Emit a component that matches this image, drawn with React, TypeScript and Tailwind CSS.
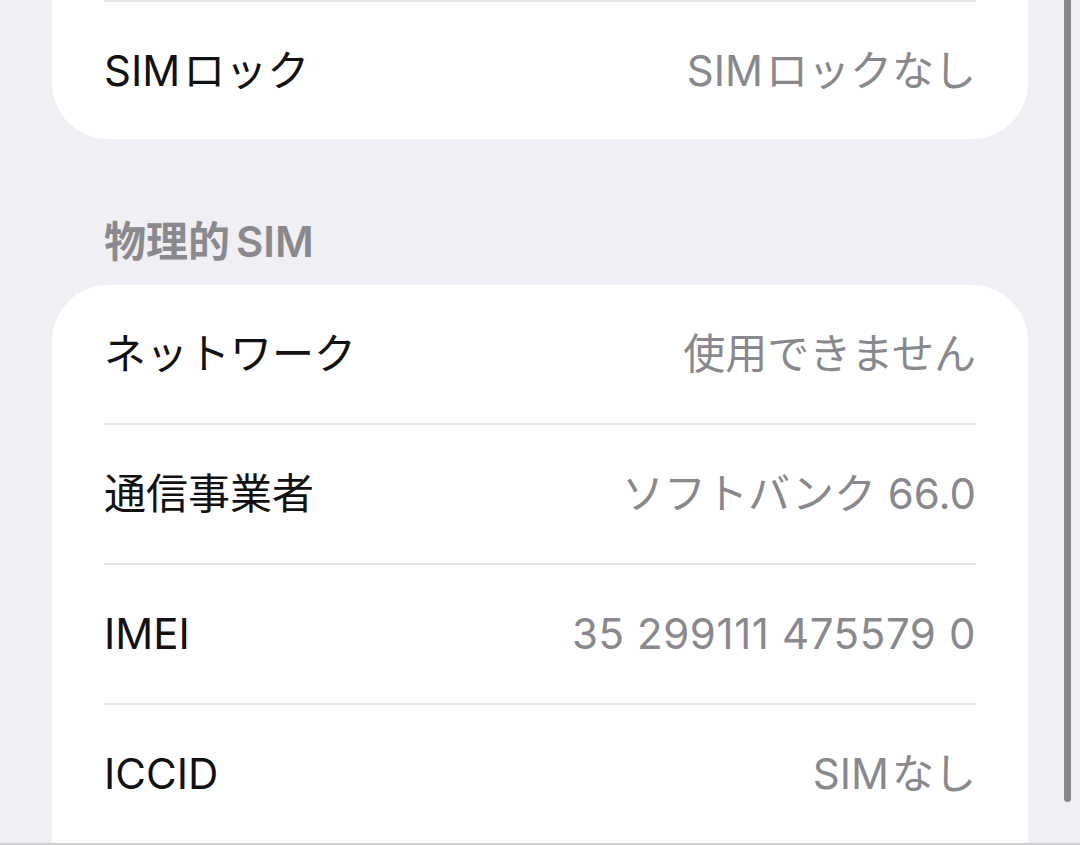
import React from 'react';

interface Row {
  label: React.ReactNode;
  value: React.ReactNode;
  valueClass?: string;
}

// iOS leaves a little gap between Latin and kana, e.g. "SIM ロック"
function Sim() {
  return <span className="mr-[3px]">SIM</span>;
}

const physicalSim: (Row & { id: string })[] = [
  { id: 'network', label: 'ネットワーク', value: '使用できません' },
  { id: 'carrier', label: '通信事業者', value: 'ソフトバンク 66.0' },
  { id: 'imei', label: 'IMEI', value: '35 299111 475579 0', valueClass: 'tracking-[0.6px]' },
  {
    id: 'iccid',
    label: 'ICCID',
    value: (
      <>
        <Sim />
        なし
      </>
    ),
  },
];

const font = "font-['Inter','Noto_Sans_CJK_JP',sans-serif]";

function Separator() {
  return <div className="mx-[52px] h-[2px] bg-[#e6e6ea]" />;
}

function InfoRow({ label, value, valueClass = '' }: Row) {
  return (
    <div className="flex h-[138px] items-center justify-between px-[52px]">
      <span className="text-[42px] leading-[48px] text-[#111111]">{label}</span>
      <span className={`text-[42px] leading-[48px] text-[#88888d] ${valueClass}`}>{value}</span>
    </div>
  );
}

export default function App() {
  return (
    <div className={`relative h-[845px] w-[1080px] overflow-hidden bg-[#efeff4] ${font}`}>
      <div className="ml-[52px] w-[976px]">
        {/* SIM lock card (scrolled, only bottom visible) */}
        <div className="rounded-b-[56px] bg-white">
          <Separator />
          <div className="flex h-[137px] items-center justify-between px-[52px]">
            <span className="text-[42px] leading-[48px] text-[#111111]">
              <Sim />
              ロック
            </span>
            <span className="text-[42px] leading-[48px] text-[#88888d]">
              <Sim />
              ロックなし
            </span>
          </div>
        </div>

        {/* section header */}
        <div className="flex h-[146px] items-end px-[52px] pb-[20px]">
          <span className="text-[42px] font-semibold leading-[46px] text-[#8a8a8e]">
            物理的<span className="ml-[6px]">SIM</span>
          </span>
        </div>

        {/* physical SIM card */}
        <div className="rounded-t-[56px] bg-white">
          {physicalSim.map(({ id, ...row }) => (
            <div key={id}>
              <InfoRow {...row} />
              <Separator />
            </div>
          ))}
        </div>
      </div>

      {/* scroll indicator */}
      <div className="absolute right-[9px] top-[-10px] h-[812px] w-[7px] rounded-full bg-[#85858a]" />
      <div className="absolute bottom-0 left-0 h-[2px] w-full bg-[#cfcfd4]" />
    </div>
  );
}
